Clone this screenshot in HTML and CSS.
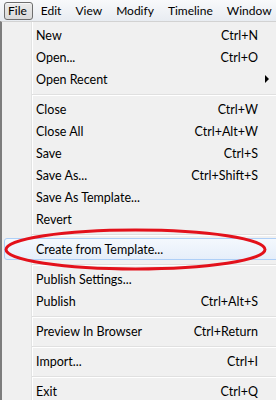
FILE: index.html
```html
<!DOCTYPE html>
<html lang="en">
<head>
    <meta charset="UTF-8">
    <title>File menu</title>
    <link rel="stylesheet" href="styles.css">
</head>
<body>
    <!-- Menu bar -->
    <div class="menubar">
        <span class="bar-item open">File</span>
        <span class="bar-item">Edit</span>
        <span class="bar-item">View</span>
        <span class="bar-item">Modify</span>
        <span class="bar-item">Timeline</span>
        <span class="bar-item">Window</span>
    </div>

    <!-- File dropdown -->
    <div class="menu">
        <div class="row"><span class="label">New</span><span class="key">Ctrl+N</span></div>
        <div class="row"><span class="label">Open...</span><span class="key">Ctrl+O</span></div>
        <div class="row"><span class="label">Open Recent</span><span class="key"></span><span class="arrow"></span></div>
        <div class="sep"></div>
        <div class="row"><span class="label">Close</span><span class="key">Ctrl+W</span></div>
        <div class="row"><span class="label">Close All</span><span class="key">Ctrl+Alt+W</span></div>
        <div class="row"><span class="label">Save</span><span class="key">Ctrl+S</span></div>
        <div class="row"><span class="label">Save As...</span><span class="key">Ctrl+Shift+S</span></div>
        <div class="row"><span class="label">Save As Template...</span><span class="key"></span></div>
        <div class="row"><span class="label">Revert</span><span class="key"></span></div>
        <div class="sep"></div>
        <div class="row hot"><span class="label">Create from Template...</span><span class="key"></span></div>
        <div class="sep"></div>
        <div class="row"><span class="label">Publish Settings...</span><span class="key"></span></div>
        <div class="row"><span class="label">Publish</span><span class="key">Ctrl+Alt+S</span></div>
        <div class="sep"></div>
        <div class="row"><span class="label">Preview In Browser</span><span class="key">Ctrl+Return</span></div>
        <div class="sep"></div>
        <div class="row"><span class="label">Import...</span><span class="key">Ctrl+I</span></div>
        <div class="sep"></div>
        <div class="row"><span class="label">Exit</span><span class="key">Ctrl+Q</span></div>

        <!-- red marker drawn over the highlighted item -->
        <svg class="marker" width="276" height="50" viewBox="0 0 276 50">
            <ellipse cx="135.5" cy="21.5" rx="129.5" ry="19.5" fill="none" stroke="#e3111b" stroke-width="3"/>
        </svg>
    </div>
</body>
</html>
```

FILE: styles.css
```css
html, body {
    margin: 0;
    padding: 0;
    overflow: hidden;
}
body {
    width: 276px;
    height: 400px;
    background: #f0f0f0;
    font-family: Lato, "Open Sans", sans-serif;
    font-size: 12.5px;
    color: #000;
}
.menubar {
    display: flex;
    align-items: center;
    gap: 4px;
    height: 21px;
    padding-left: 4px;
    background: linear-gradient(#f8f9fb, #e8ecf1);
    font-size: 12px;
    white-space: nowrap;
}
.bar-item {
    padding: 0 5px 0 3px;
    line-height: 16px;
    border: 1px solid transparent;
}
.bar-item.open {
    border-color: #6e6e6e;
    border-radius: 3px;
    background: linear-gradient(#ebebeb, #dadada);
    box-shadow: inset 0 1px 0 #f7f7f7;
}
.menu {
    position: relative;
    width: 290px;
    height: 380px;
    border-top: 1px solid #d2d2d2;
    border-left: 2px solid #7d7d7d;
    padding-top: 2px;
    box-sizing: border-box;
    background-color: #f0f0f0;
    background-image: linear-gradient(to right, transparent 29px, #e2e3e3 29px, #e2e3e3 30px, #fff 30px, #fff 31px, transparent 31px);
}
.row {
    display: grid;
    grid-template-columns: 1fr auto 29px;
    align-items: center;
    height: 22px;
    margin: 0 2px;
    padding-left: 31px;
    border: 1px solid transparent;
    box-sizing: border-box;
    white-space: nowrap;
}
.row.hot {
    border-color: #aecff7;
    border-radius: 3px;
    background: linear-gradient(#f4f8fd, #e6eefa);
}
.arrow {
    margin-left: 7px;
    width: 0;
    height: 0;
    border-top: 4px solid transparent;
    border-bottom: 4px solid transparent;
    border-left: 4px solid #000;
}
.sep {
    height: 8px;
    margin-left: 30px;
    box-sizing: border-box;
    padding-top: 4px;
}
.sep::before {
    content: "";
    display: block;
    height: 1px;
    background: #e0e0e0;
    border-bottom: 1px solid #fff;
}
.marker {
    position: absolute;
    left: -2px;
    top: 206px;
}
```
